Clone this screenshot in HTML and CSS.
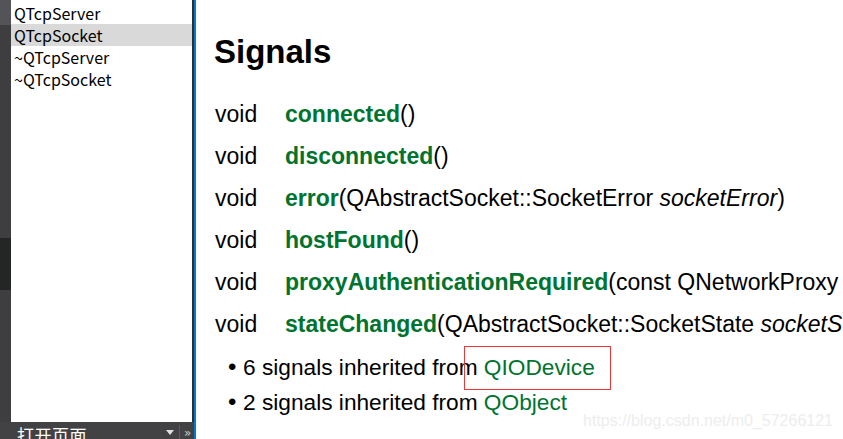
FILE: index.html
```html
<!DOCTYPE html>
<html>
<head>
<meta charset="utf-8">
<link rel="stylesheet" href="styles.css">
</head>
<body>
<div class="app">
  <aside class="sidebar">
    <div class="side-top">
      <div class="strip">
        <div class="strip-a"></div>
        <div class="strip-b"></div>
        <div class="strip-c"></div>
        <div class="strip-d"></div>
      </div>
      <ul class="index-list">
        <li>QTcpServer</li>
        <li class="selected">QTcpSocket</li>
        <li>~QTcpServer</li>
        <li>~QTcpSocket</li>
      </ul>
      <div class="divider"></div>
    </div>
    <div class="side-bar">
      <span class="bar-label">打开页面</span>
      <span class="bar-arrow"></span>
      <span class="bar-sep"></span>
      <span class="bar-more">»</span>
    </div>
  </aside>
  <div class="focus-line"></div>
  <main class="doc">
    <h2 class="doc-title">Signals</h2>
    <div class="sig-table">
      <div class="sig-row"><span class="sig-type">void</span><span class="sig-decl"><b class="fn">connected</b>()</span></div>
      <div class="sig-row"><span class="sig-type">void</span><span class="sig-decl"><b class="fn">disconnected</b>()</span></div>
      <div class="sig-row"><span class="sig-type">void</span><span class="sig-decl"><b class="fn">error</b>(QAbstractSocket::SocketError <i>socketError</i>)</span></div>
      <div class="sig-row"><span class="sig-type">void</span><span class="sig-decl"><b class="fn">hostFound</b>()</span></div>
      <div class="sig-row"><span class="sig-type">void</span><span class="sig-decl"><b class="fn">proxyAuthenticationRequired</b>(const QNetworkProxy &amp;<i>proxy</i>, QAuthenticator *<i>authenticator</i>)</span></div>
      <div class="sig-row"><span class="sig-type">void</span><span class="sig-decl"><b class="fn">stateChanged</b>(QAbstractSocket::SocketState <i>socketState</i>)</span></div>
    </div>
    <ul class="inherit-list">
      <li><span class="dot">•</span>6 signals inherited from <span class="link">QIODevice</span></li>
      <li><span class="dot">•</span>2 signals inherited from <span class="link">QObject</span></li>
    </ul>
    <div class="mark-box"></div>
    <div class="watermark">https://blog.csdn.net/m0_57266121</div>
  </main>
</div>
</body>
</html>
```
FILE: styles.css
```css
html, body {
  margin: 0;
  padding: 0;
  background: #ffffff;
  overflow: hidden;
}
.app {
  display: flex;
  width: 843px;
  height: 439px;
}
.sidebar {
  width: 194px;
  height: 439px;
  flex-shrink: 0;
  display: flex;
  flex-direction: column;
  background: #404043;
}
.side-top {
  flex: 1;
  display: flex;
  min-height: 0;
}
.strip {
  width: 11px;
  display: flex;
  flex-direction: column;
}
.strip-a { height: 25px; background: #545458; }
.strip-b { height: 213px; background: #3e3e41; }
.strip-c { height: 52px; background: #232625; }
.strip-d { flex: 1; background: #3e3e41; }
.index-list {
  flex: 1;
  margin: 0;
  padding: 2px 0 0 0;
  list-style: none;
  background: #ffffff;
  font-family: "Noto Sans CJK SC", "Noto Sans", sans-serif;
  font-size: 16px;
  color: #000000;
}
.index-list li {
  height: 22px;
  line-height: 22px;
  padding-left: 3px;
}
.index-list li.selected {
  background: #d9d9d9;
}
.divider {
  width: 2px;
  background: #2e2e30;
}
.side-bar {
  height: 17px;
  display: flex;
  align-items: flex-start;
  background: #424245;
  color: #ffffff;
  overflow: hidden;
}
.bar-label {
  margin-left: 17px;
  font-family: "Noto Sans CJK SC", sans-serif;
  font-size: 17px;
  line-height: 17px;
  margin-top: 4px;
  letter-spacing: 0.5px;
}
.bar-arrow {
  margin-left: 79px;
  margin-top: 8px;
  width: 0;
  height: 0;
  border-left: 4px solid transparent;
  border-right: 4px solid transparent;
  border-top: 5px solid #e0e0e0;
}
.bar-sep {
  margin-left: 5px;
  margin-top: 3px;
  width: 1px;
  height: 14px;
  background: #5c5c60;
}
.bar-more {
  margin-left: 4px;
  font-family: "DejaVu Sans", sans-serif;
  font-size: 12px;
  line-height: 12px;
  margin-top: 5px;
  color: #c8c8c8;
}
.focus-line {
  width: 2px;
  flex-shrink: 0;
  background: #0078d7;
}
.doc {
  flex: 1;
  min-width: 0;
  position: relative;
  overflow: hidden;
  padding-left: 18px;
  font-family: "Liberation Sans", Arial, sans-serif;
  color: #000000;
  white-space: nowrap;
}
.doc-title {
  margin: 0;
  padding-top: 32px;
  font-size: 33px;
  line-height: 40px;
  font-weight: bold;
}
.sig-table {
  margin-top: 21px;
}
.sig-row {
  display: flex;
  height: 42px;
  font-size: 23px;
  line-height: 42px;
}
.sig-type {
  width: 70px;
  flex-shrink: 0;
  padding-left: 1px;
}
.sig-decl {
  flex-shrink: 0;
}
.fn {
  color: #00732f;
  font-weight: bold;
}
.inherit-list {
  margin: 5px 0 0 0;
  padding: 0 0 0 14px;
  list-style: none;
  font-size: 22.7px;
}
.inherit-list li {
  height: 35px;
  line-height: 35px;
}
.dot {
  display: inline-block;
  width: 15px;
  line-height: 20px;
  font-size: 24px;
}
.link {
  color: #00732f;
}
.mark-box {
  position: absolute;
  left: 268px;
  top: 346px;
  width: 145px;
  height: 42px;
  border: 1px solid #e8393c;
}
.watermark {
  position: absolute;
  right: 10px;
  top: 411px;
  font-size: 16px;
  line-height: 20px;
  color: #ededed;
}
```
